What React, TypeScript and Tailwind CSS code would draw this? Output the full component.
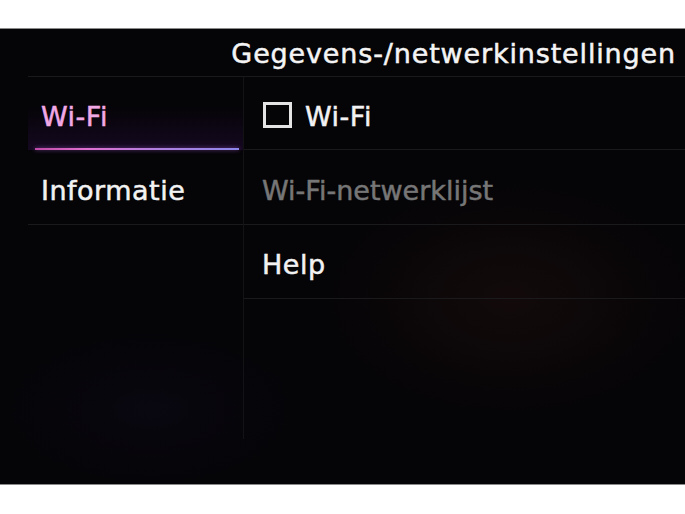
import React from "react";

export default function App() {
  const font = { fontFamily: '"DejaVu Sans", "Liberation Sans", sans-serif' };
  const txt = "text-[27px] leading-none pt-[6px] [-webkit-text-stroke:0.5px_currentColor]";
  return (
    <div className="w-[685px] h-[514px] bg-white flex flex-col overflow-hidden" style={font}>
      <div className="h-[28px] bg-white shrink-0" />
      <div className="h-px bg-[#8a8a8a] shrink-0" />
      <div className="relative h-[455px] shrink-0 bg-[#050407] flex flex-col overflow-hidden">
        <div className="absolute left-[320px] top-[150px] w-[380px] h-[240px] rounded-full bg-[radial-gradient(ellipse_at_center,rgba(50,25,18,0.3),rgba(0,0,0,0)_70%)]" />
        <div className="absolute left-[0px] top-[300px] w-[300px] h-[160px] bg-[radial-gradient(ellipse_at_center,rgba(18,14,36,0.3),rgba(0,0,0,0)_70%)]" />
        <div className="relative ml-[28px] h-[48px] shrink-0 flex items-center justify-end pr-[9px] border-b border-[#19191b]">
          <span className="text-[27px] leading-none text-[#f4f4f4] tracking-[0.85px] pt-[1px] [-webkit-text-stroke:0.5px_currentColor]">
            Gegevens-/netwerkinstellingen
          </span>
        </div>
        <div className="relative flex flex-1 ml-[28px]">
          <div className="w-[216px] shrink-0 border-r border-[#131315] flex flex-col h-[362px]">
            <div className="relative h-[73px] flex items-center pl-[13px] bg-[linear-gradient(to_bottom,rgba(0,0,0,0)_40%,rgba(45,14,70,0.4)_100%)]">
              <span className={`${txt} tracking-[0.5px] text-[#f1a9e6]`}>Wi-Fi</span>
              <div className="absolute left-[7px] right-[4px] bottom-0 h-[2px] bg-[linear-gradient(to_right,#c04aa8,#e070d0_25%,#b080e0_60%,#8c86ea)] shadow-[0_0_4px_rgba(180,100,230,0.6)]" />
            </div>
            <div className="h-[75px] flex items-center pl-[13px] border-b border-[#1a1a1c]">
              <span className={`${txt} tracking-[0.5px] text-[#f2f2f2]`}>Informatie</span>
            </div>
          </div>
          <div className="flex-1 flex flex-col">
            <div className="h-[73px] flex items-center pl-[19px] border-b border-[#1a1a1c]">
              <div className="w-[29px] h-[26px] border-[3px] border-[#e4e4e4] mr-[13px] mt-[3px]" />
              <span className={`${txt} tracking-[0.5px] text-[#f2f2f2]`}>Wi-Fi</span>
            </div>
            <div className="h-[75px] flex items-center pl-[18px] border-b border-[#1a1a1c]">
              <span className={`${txt} text-[#767676]`}>Wi-Fi-netwerklijst</span>
            </div>
            <div className="h-[74px] flex items-center pl-[18px] border-b border-[#1a1a1c]">
              <span className={`${txt} tracking-[0.5px] text-[#f2f2f2]`}>Help</span>
            </div>
          </div>
        </div>
      </div>
      <div className="h-px bg-[#8a8a8a] shrink-0" />
      <div className="flex-1 bg-white" />
    </div>
  );
}
